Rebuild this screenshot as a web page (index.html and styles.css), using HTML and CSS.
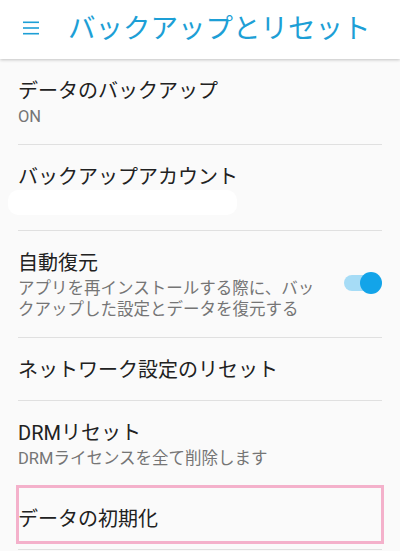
FILE: index.html
```html
<!DOCTYPE html>
<html lang="ja">
<head>
    <meta charset="UTF-8">
    <meta name="viewport" content="width=device-width, initial-scale=1.0">
    <title>バックアップとリセット</title>
    <link rel="stylesheet" href="styles.css">
</head>
<body>

<div class="header">
    <svg class="menu-icon" width="16" height="14" viewBox="0 0 16 14">
        <rect x="0" y="0.5" width="16" height="1.6" fill="#1d9fd6"/>
        <rect x="0" y="6.2" width="16" height="1.6" fill="#1d9fd6"/>
        <rect x="0" y="11.9" width="16" height="1.6" fill="#1d9fd6"/>
    </svg>
    <h1 class="title">バックアップとリセット</h1>
</div>

<div class="list">
    <div class="row">
        <div class="text">
            <div class="label">データのバックアップ</div>
            <div class="summary">ON</div>
        </div>
    </div>

    <div class="row">
        <div class="text">
            <div class="label">バックアップアカウント</div>
            <div class="summary"><span class="hidden-account"></span></div>
        </div>
    </div>

    <div class="row">
        <div class="text">
            <div class="label">自動復元</div>
            <div class="summary">アプリを再インストールする際に、バックアップした設定とデータを復元する</div>
        </div>
        <div class="switch">
            <div class="track"></div>
            <div class="thumb"></div>
        </div>
    </div>

    <div class="row">
        <div class="text">
            <div class="label">ネットワーク設定のリセット</div>
        </div>
    </div>

    <div class="row">
        <div class="text">
            <div class="label">DRMリセット</div>
            <div class="summary">DRMライセンスを全て削除します</div>
        </div>
    </div>

    <div class="row highlighted">
        <div class="text">
            <div class="label">データの初期化</div>
        </div>
    </div>
</div>

</body>
</html>
```

FILE: styles.css
```css
body {
    margin: 0;
    background-color: #fafafa;
    font-family: Roboto, "Noto Sans CJK JP", sans-serif;
    color: #212121;
}
.header {
    height: 59px;
    display: flex;
    align-items: center;
    background-color: #fff;
    box-shadow: 0 1px 3px rgba(0, 0, 0, 0.22);
    position: relative;
}
.menu-icon {
    margin-left: 23px;
    margin-right: 29px;
    margin-bottom: 3px;
}
.title {
    margin: 0;
    font-size: 27.5px;
    font-weight: normal;
    color: #1d9fd6;
    line-height: 1;
    padding-bottom: 2px;
}
.row {
    display: flex;
    align-items: center;
    margin: 0 18px;
    padding: 19px 0 17px;
    border-bottom: 1px solid #e0e0e0;
    position: relative;
}
.text {
    flex: 1;
}
.label {
    font-size: 20px;
    line-height: 26px;
}
.summary {
    margin-top: 2px;
    font-size: 16.5px;
    line-height: 21px;
    color: #757575;
    padding-right: 16px;
}
.hidden-account {
    display: block;
    height: 25px;
    width: 229px;
    margin: -2px 0 -2px -10px;
    background-color: #fff;
    border-radius: 10px;
}
.switch {
    position: relative;
    width: 39px;
    height: 22px;
    flex-shrink: 0;
    margin-bottom: 4px;
}
.track {
    position: absolute;
    left: 1px;
    top: 3px;
    width: 32px;
    height: 16px;
    border-radius: 8px;
    background-color: #a6dcf6;
}
.thumb {
    position: absolute;
    right: 0;
    top: 0;
    width: 22px;
    height: 22px;
    border-radius: 50%;
    background-color: #13a4e9;
}
.highlighted::after {
    content: "";
    position: absolute;
    left: -2px;
    right: -2px;
    top: -2px;
    bottom: 5px;
    border: 3px solid #f4b1cb;
}
```
